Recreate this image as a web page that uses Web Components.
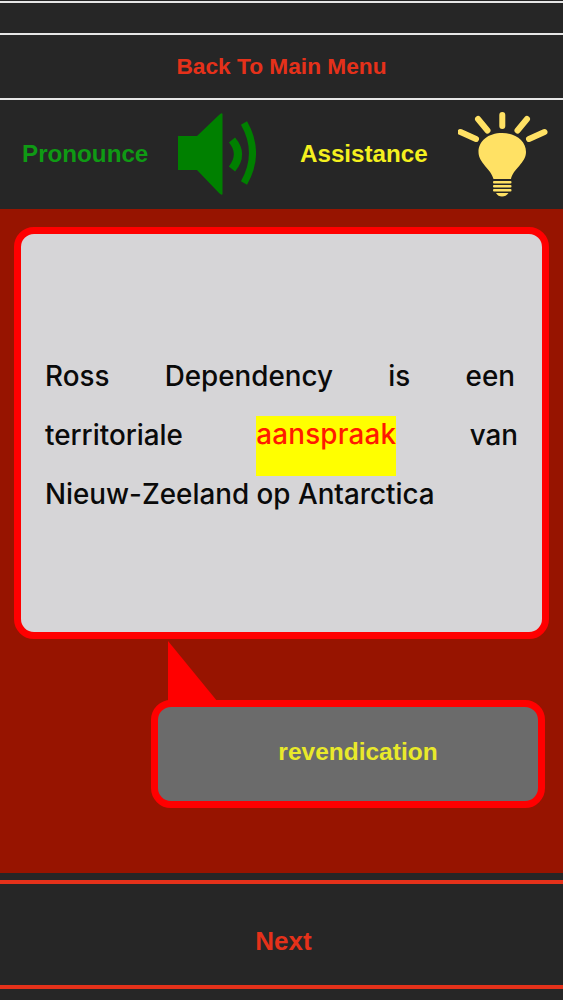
<!DOCTYPE html>
<html lang="nl">
<head>
<meta charset="utf-8">
<title>Ross Dependency</title>
<style>
  html, body { margin: 0; background: #262626; }
  body { font-family: "Liberation Sans", Arial, sans-serif; }
  vocab-screen { width: 563px; height: 1000px; }
</style>
</head>
<body>
<vocab-screen>
  <menu-bar slot="top" line="#e6e6e6" height="32"></menu-bar>
  <menu-bar slot="top" line="#e6e6e6" height="65" label="Back To Main Menu"></menu-bar>
  <tool-bar slot="top"></tool-bar>
  <word-card>
    <card-line class="short"><span>Ross</span><span>Dependency</span><span>is</span><span>een</span></card-line>
    <card-line><span>territoriale</span><mark-word>aanspraak</mark-word><span>van</span></card-line>
    <card-line class="last"><span>Nieuw-Zeeland op Antarctica</span></card-line>
  </word-card>
  <hint-bubble>revendication</hint-bubble>
  <next-bar slot="bottom" label="Next"></next-bar>
</vocab-screen>

<script>
  // page frame: top bars, red play area, bottom bar
  class VocabScreen extends HTMLElement {
    connectedCallback() {
      const root = this.attachShadow({ mode: 'open' });
      root.innerHTML = `
        <style>
          :host { display: flex; flex-direction: column; overflow: hidden; }
          .top { padding-top: 1px; flex: none; }
          .play { flex: 1; background: #971400; padding: 18px 14px 0; box-sizing: border-box; }
          .bottom { flex: none; }
        </style>
        <div class="top"><slot name="top"></slot></div>
        <div class="play"><slot></slot></div>
        <div class="bottom"><slot name="bottom"></slot></div>`;
    }
  }

  class MenuBar extends HTMLElement {
    connectedCallback() {
      const root = this.attachShadow({ mode: 'open' });
      const h = this.getAttribute('height') || 40;
      root.innerHTML = `
        <style>
          :host { display: block; background: #262626; border-top: 2px solid ${this.getAttribute('line')}; box-sizing: border-box; height: ${h}px; }
          div { height: 100%; display: flex; align-items: center; justify-content: center;
            color: #e5311a; font: bold 22.700px "Liberation Sans", Arial, sans-serif; }
        </style>
        <div>${this.getAttribute('label') || ''}</div>`;
    }
  }

  const SPEAKER = `<svg width="78" height="84" viewBox="0 0 78 84">
    <path fill="#008000" d="M0 24H19L41 3Q44 0 44.500 2V82Q44 84 41 81L19 58H0Z"/>
    <path fill="none" stroke="#008000" stroke-width="8" d="M54 28Q66 42 54 57"/>
    <path fill="none" stroke="#008000" stroke-width="7" d="M66 11Q83 41 66 71"/>
  </svg>`;

  const BULB = `<svg width="90" height="86" viewBox="0 0 90 86">
    <g fill="none" stroke="#ffe164" stroke-width="6" stroke-linecap="round">
      <path d="M44.300 4V15M20 8L29.500 19.500M69 8L59.500 19.500M2.500 21L18 28M86.500 21L71 28"/>
    </g>
    <path fill="#ffe164" d="M44.200 22C58 22 68 30 68 41C68 52 55 58 53 68H35.500C33 58 20.500 52 20.500 41C20.500 30 30 22 44.200 22Z"/>
    <g fill="#ffe164">
      <rect x="35" y="70" width="18.500" height="2.500" rx="1"/>
      <rect x="35" y="74" width="18.500" height="2.500" rx="1"/>
      <rect x="35" y="78" width="18.500" height="2.500" rx="1"/>
      <path d="M38 82H50.500Q48 85.500 44 85.500Q40 85.500 38 82Z"/>
    </g>
  </svg>`;

  class ToolBar extends HTMLElement {
    connectedCallback() {
      const root = this.attachShadow({ mode: 'open' });
      root.innerHTML = `
        <style>
          :host { display: flex; align-items: center; height: 111px; box-sizing: border-box;
            background: #262626; border-top: 2px solid #e6e6e6; padding: 0 15px 2px 22px;
            font: bold 24.200px "Liberation Sans", Arial, sans-serif; }
          .say { color: #0f9a14; width: 156px; }
          .help { color: #f4f01f; width: 158px; }
          .icon { width: 122px; display: flex; }
          svg { display: block; }
          .bulb { width: auto; }
        </style>
        <span class="say">Pronounce</span>
        <span class="icon">${SPEAKER}</span>
        <span class="help">Assistance</span>
        <span class="icon bulb">${BULB}</span>`;
    }
  }

  class WordCard extends HTMLElement {
    connectedCallback() {
      const root = this.attachShadow({ mode: 'open' });
      root.innerHTML = `
        <style>
          :host { display: flex; flex-direction: column; justify-content: center; box-sizing: border-box; height: 412px; width: 535px;
            background: #d6d5d7; border: 7px solid #ff0000; border-radius: 20px; padding: 4px 24px 0;
            color: #0a0a0a; font: 500 27.800px Inter, "Liberation Sans", sans-serif; }
        </style>
        <slot></slot>`;
    }
  }

  // one justified row of the sentence, words pushed to both edges
  class CardLine extends HTMLElement {
    connectedCallback() {
      const root = this.attachShadow({ mode: 'open' });
      root.innerHTML = `
        <style>
          :host { display: flex; justify-content: space-between; align-items: flex-start; height: 59px; line-height: 59px; }
          :host(.short) { margin-right: 3px; }
        </style>
        <slot></slot>`;
    }
  }

  class MarkWord extends HTMLElement {
    connectedCallback() {
      const root = this.attachShadow({ mode: 'open' });
      root.innerHTML = `
        <style>
          :host { display: block; background: #ffff00; color: #ff1a00; letter-spacing: .2px; height: 60px; margin-top: 10px; line-height: 37px; }
        </style>
        <slot></slot>`;
    }
  }

  class HintBubble extends HTMLElement {
    connectedCallback() {
      const root = this.attachShadow({ mode: 'open' });
      root.innerHTML = `
        <style>
          :host { display: flex; align-items: center; justify-content: center; position: relative; box-sizing: border-box;
            width: 394px; height: 108px; margin: 61px 0 0 137px; padding: 0 0 4px 20px; background: #6b6b6b;
            border: 7px solid #ff0000; border-radius: 20px;
            color: #e9e92a; font: bold 24.500px "Liberation Sans", Arial, sans-serif; }
          .tail { position: absolute; left: 10px; top: -66px; width: 54px; height: 66px;
            background: #ff0000; clip-path: polygon(0 0, 100% 100%, 0 100%); }
        </style>
        <span class="tail"></span>
        <slot></slot>`;
    }
  }

  class NextBar extends HTMLElement {
    connectedCallback() {
      const root = this.attachShadow({ mode: 'open' });
      root.innerHTML = `
        <style>
          :host { display: block; box-sizing: border-box; height: 127px; padding-top: 7px; background: #262626; }
          div { height: 109px; box-sizing: border-box; display: flex; align-items: center; justify-content: center;
            padding: 14px 0 0 4px;
            border-top: 4px solid #e5311a; border-bottom: 4px solid #e5311a;
            color: #e5311a; font: bold 26px "Liberation Sans", Arial, sans-serif; }
        </style>
        <div>${this.getAttribute('label')}</div>`;
    }
  }

  customElements.define('vocab-screen', VocabScreen);
  customElements.define('menu-bar', MenuBar);
  customElements.define('tool-bar', ToolBar);
  customElements.define('word-card', WordCard);
  customElements.define('card-line', CardLine);
  customElements.define('mark-word', MarkWord);
  customElements.define('hint-bubble', HintBubble);
  customElements.define('next-bar', NextBar);
</script>
</body>
</html>
